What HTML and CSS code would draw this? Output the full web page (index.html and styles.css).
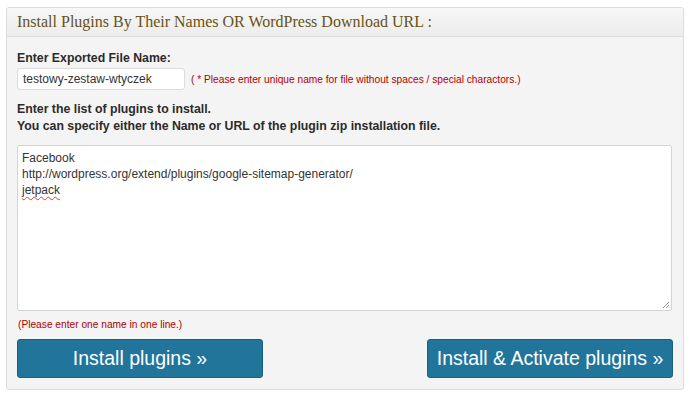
FILE: index.html
```html
<!DOCTYPE html>
<html>
<head>
<meta charset="utf-8">
<link rel="stylesheet" href="styles.css">
</head>
<body>
<div class="panel">
  <div class="panel-head">Install Plugins By Their Names OR WordPress Download URL :</div>
  <div class="panel-body">
    <div class="label">Enter Exported File Name:</div>
    <div class="name-row">
      <div class="input">testowy-zestaw-wtyczek</div>
      <span class="hint">( * Please enter unique name for file without spaces / special charactors.)</span>
    </div>
    <div class="label list-label">Enter the list of plugins to install.<br>You can specify either the Name or URL of the plugin zip installation file.</div>
    <div class="textarea">
      <div>Facebook</div>
      <div>http://wordpress.org/extend/plugins/google-sitemap-generator/</div>
      <div><span class="misspelled">jetpack</span></div>
      <svg class="grip" width="8" height="8" viewBox="0 0 8 8"><path d="M7 1 L1 7 M7 4 L4 7 M7 6.5 L6.5 7" stroke="#999" stroke-width="1" fill="none"/></svg>
    </div>
    <div class="hint note">(Please enter one name in one line.)</div>
    <div class="buttons">
      <div class="btn">Install plugins »</div>
      <div class="btn">Install &amp; Activate plugins »</div>
    </div>
  </div>
</div>
</body>
</html>
```
FILE: styles.css
```css
html, body { margin: 0; padding: 0; background: #fff; }
body { padding: 7px 6px 0 6px; font-family: "Liberation Sans", Arial, sans-serif; }
.panel {
  width: 678px;
  height: 383px;
  border: 1px solid #dcdcdc;
  border-radius: 3px;
  background: #f4f4f4;
  box-sizing: border-box;
  overflow: hidden;
}
.panel-head {
  height: 29px;
  box-sizing: border-box;
  padding: 5px 0 0 10px;
  background: linear-gradient(#f7f7f7, #ececec);
  border-bottom: 1px solid #dcdcdc;
  font-family: "Liberation Serif", "Times New Roman", serif;
  font-size: 16px;
  color: #675215;
}
.panel-body { padding: 13px 10px 0 10px; }
.label { font-weight: bold; font-size: 12.3px; color: #2b2b2b; line-height: 17px; }
.name-row { display: flex; align-items: center; margin-top: 1px; }
.input {
  width: 168px; height: 22px; box-sizing: border-box;
  background: #fff; border: 1px solid #dcdcdc; border-radius: 3px;
  font-size: 12px; color: #333; padding: 3px 0 0 5px;
}
.hint { font-size: 10.2px; color: #b20000; margin-left: 6px; }
.list-label { margin-top: 11px; }
.textarea {
  position: relative;
  margin-top: 10px; width: 655px; height: 166px; box-sizing: border-box;
  background: #fff; border: 1px solid #d4d4d4; border-radius: 2px;
  font-size: 12px; color: #333; line-height: 16px; padding: 4px 4px;
}
.misspelled { text-decoration: underline wavy #e33; text-underline-offset: 2px; text-decoration-thickness: 1px; }
.grip { position: absolute; right: 1px; bottom: 1px; }
.note { margin: 8px 0 0 1px; }
.buttons { display: flex; justify-content: space-between; margin-top: 9px; width: 656px; }
.btn {
  width: 246px; height: 39px; box-sizing: border-box;
  background: #21759b; border: 1px solid #1b607f; border-radius: 3px;
  color: #fff; font-size: 19.5px; text-align: center; line-height: 37px;
}
```
